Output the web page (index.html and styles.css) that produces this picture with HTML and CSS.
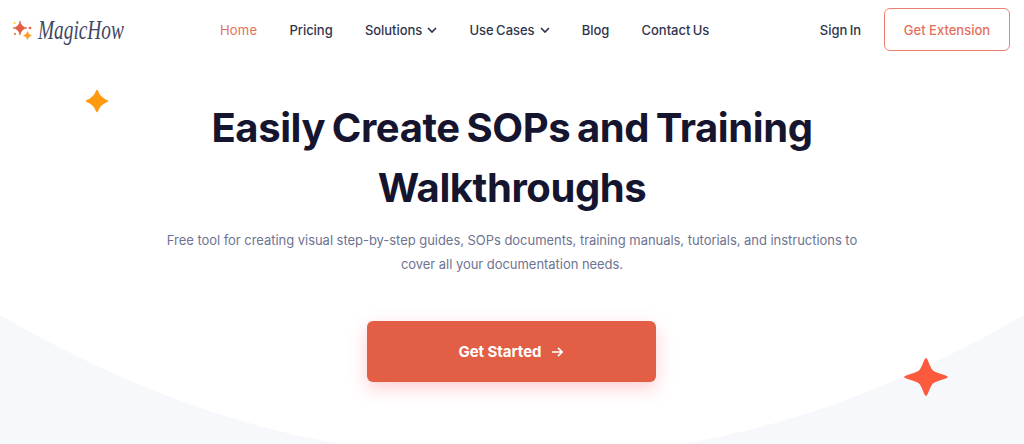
FILE: index.html
```html
<!DOCTYPE html>
<html lang="en">
<head>
<meta charset="utf-8">
<title>MagicHow</title>
<link rel="stylesheet" href="styles.css">
</head>
<body>
<svg class="backdrop" viewBox="0 0 1024 444" aria-hidden="true"><path d="M0 315C190 425 350 458 512 458C674 458 834 425 1024 315V444H0Z"/></svg>
<header class="topbar">
  <a class="logo" href="#">
    <svg class="logo-mark" viewBox="0 0 20 20" aria-hidden="true">
      <path class="red" d="M7 0Q8 6 14 7Q8 8 7 14Q6 8 0 7Q6 6 7 0Z"/>
      <path class="orange" d="M14.500 10.500Q15.200 13.800 18.500 14.500Q15.200 15.200 14.500 18.500Q13.800 15.200 10.500 14.500Q13.800 13.800 14.500 10.500Z"/>
      <circle class="yellow" cx="1.700" cy="2" r="1"/>
      <circle class="red" cx="17" cy="7" r="1.100"/>
      <circle class="red" cx="2" cy="13" r=".8"/>
    </svg>
    <span class="logo-word">MagicHow</span>
  </a>
  <nav class="menu">
    <a class="link active" href="#">Home</a>
    <a class="link" href="#">Pricing</a>
    <a class="link" href="#">Solutions<svg class="chev" viewBox="0 0 10 6"><path d="M1 1l4 4 4-4"/></svg></a>
    <a class="link" href="#">Use Cases<svg class="chev" viewBox="0 0 10 6"><path d="M1 1l4 4 4-4"/></svg></a>
    <a class="link" href="#">Blog</a>
    <a class="link" href="#">Contact Us</a>
  </nav>
  <div class="actions">
    <a class="link" href="#">Sign In</a>
    <a class="outline" href="#">Get Extension</a>
  </div>
</header>
<main class="hero">
  <svg class="spark spark-orange" viewBox="0 0 24 24" aria-hidden="true"><path d="M12 1.500Q14.800 9.200 22.500 12Q14.800 14.800 12 22.500Q9.200 14.800 1.500 12Q9.200 9.200 12 1.500Z"/></svg>
  <svg class="spark spark-red" viewBox="0 0 44 40" aria-hidden="true"><path d="M22 1C24 1 25.500 10 29 13.500C32 16 43 18 44 20C43 22 32 24 29 26.500C25.500 30 24 39 22 39C20 39 18.500 30 15 26.500C12 24 1 22 0 20C1 18 12 16 15 13.500C18.500 10 20 1 22 1Z"/></svg>
  <h1 class="title">Easily Create SOPs and Training Walkthroughs</h1>
  <p class="lead">Free tool for creating visual step-by-step guides, SOPs documents, training manuals, tutorials, and instructions to cover all your documentation needs.</p>
  <a class="cta" href="#">Get Started<svg class="arrow" viewBox="0 0 14 12"><path d="M1 6h11M7.500 1.500L12 6l-4.500 4.500"/></svg></a>
</main>
</body>
</html>
```
FILE: styles.css
```css
* { box-sizing: border-box; }
html, body { margin: 0; height: 444px; overflow: hidden; }
body { position: relative; background: #fff; font-family: Inter, "Liberation Sans", sans-serif; color: #1f2440; }
a { text-decoration: none; color: inherit; }
.backdrop { position: absolute; inset: 0; width: 1024px; height: 444px; }
.backdrop path { fill: #f6f8fc; }
.topbar { position: relative; display: flex; align-items: center; height: 60px; padding: 0 14px 1px 13px; }
.logo { display: flex; align-items: center; gap: 5px; width: 207px; }
.logo-mark { width: 20px; height: 20px; flex: none; margin-top: 2px; }
.red { fill: #e25e45; stroke: #e25e45; stroke-width: .6; stroke-linejoin: round; }
.orange { fill: #ff9a1f; stroke: #ff9a1f; stroke-width: .6; stroke-linejoin: round; }
.yellow { fill: #ffc62e; }
.logo-word { font-family: "Liberation Serif", serif; font-style: italic; font-size: 28px; color: #3f4764; line-height: 1; transform: scaleX(.69); transform-origin: left center; }
.menu { display: flex; align-items: center; gap: 32.200px; }
.link { display: flex; align-items: center; gap: 5px; font-size: 13px; font-weight: 500; letter-spacing: -.03px; word-spacing: -1px; color: #30354d; }
.link.active { color: #e5705a; font-weight: 400; letter-spacing: .2px; }
.chev { width: 10px; height: 6px; fill: none; stroke: #30354d; stroke-width: 1.700; }
.actions { display: flex; align-items: center; gap: 23px; margin-left: auto; }
.outline { display: flex; align-items: center; justify-content: center; width: 126px; height: 43px; border: 1px solid #ec8171; border-radius: 6px; font-size: 13px; font-weight: 500; color: #e5705a; }
.hero { position: relative; display: flex; flex-direction: column; align-items: center; }
.title { width: 700px; margin: 38px 0 0; text-align: center; font-size: 40px; line-height: 60px; font-weight: 700; color: #15152f; letter-spacing: -.42px; word-spacing: -2.300px; }
.lead { width: 720px; margin: 10px 0 0; text-align: center; font-size: 13px; line-height: 24px; letter-spacing: -.04px; color: #6e7391; }
.cta { display: flex; align-items: center; justify-content: center; gap: 10px; width: 289px; height: 61px; margin: 45px 1px 0 0; background: #e25e45; border-radius: 6px; font-size: 15px; font-weight: 700; letter-spacing: -.05px; color: #fff; box-shadow: 0 6px 18px rgba(255, 90, 110, .3); }
.arrow { width: 13px; height: 12px; fill: none; stroke: #fff; stroke-width: 1.800; }
.spark { position: absolute; }
.spark-orange { left: 85px; top: 29px; width: 24px; height: 24px; fill: #ff9a0f; stroke: #ff9a0f; stroke-width: 1.500; stroke-linejoin: round; }
.spark-red { left: 904px; top: 297px; width: 44px; height: 40px; fill: #fb5a3c; }
```
